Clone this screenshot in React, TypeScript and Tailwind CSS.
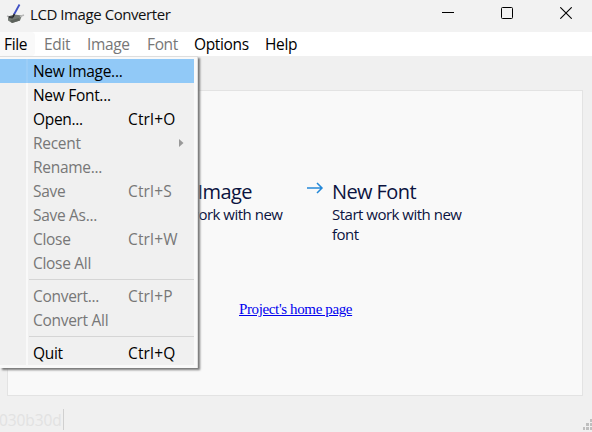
import type { ReactNode } from "react";

type Entry = { label: string; keys?: string; enabled?: boolean; active?: boolean; submenu?: boolean };

const groups: Entry[][] = [
  [
    { label: "New Image...", enabled: true, active: true },
    { label: "New Font...", enabled: true },
    { label: "Open...", keys: "Ctrl+O", enabled: true },
    { label: "Recent", submenu: true },
    { label: "Rename..." },
    { label: "Save", keys: "Ctrl+S" },
    { label: "Save As..." },
    { label: "Close", keys: "Ctrl+W" },
    { label: "Close All" },
  ],
  [{ label: "Convert...", keys: "Ctrl+P" }, { label: "Convert All" }],
  [{ label: "Quit", keys: "Ctrl+Q", enabled: true }],
];

function AppIcon() {
  return (
    <svg className="-mt-[5px]" width="20" height="22" viewBox="0 0 20 22">
      <path d="M2 13.5 L8 11.5 L16 12.5 L14 17.5 L6 20 L2 17.5Z" fill="#747a74" />
      <path d="M4 17.5 L13 15 L14 17.5 L6 20Z" fill="#5d625c" />
      <path d="M1 13 L5 14.5 M14 13.5 L18 12" stroke="#b9b9b9" strokeWidth="1.5" />
      <path d="M2.5 13 L8 13.5 L6.5 15.5 L3 15Z" fill="#353839" />
      <path d="M13.5 1.5 L8 11.5" stroke="#3f50c4" strokeWidth="1.8" />
      <path d="M8.3 11 L7 14" stroke="#24252c" strokeWidth="1.6" />
    </svg>
  );
}

function TitleBar() {
  return (
    <header className="flex h-8 items-center bg-[#f2f2f2] pl-[6px]">
      <AppIcon />
      <span className="ml-[4px] h-[28px] w-[150px] whitespace-nowrap text-[15px] leading-[24px] tracking-[-0.43px] text-[#111]">LCD Image Converter</span>
      <div className="ml-auto flex h-full gap-[47px] pr-[20px] pt-[7px]">
        <svg width="12" height="12" shapeRendering="crispEdges"><path d="M0 5.5H12" stroke="#000" /></svg>
        <svg width="12" height="12"><rect x=".5" y=".5" width="11" height="11" rx="1" fill="none" stroke="#000" /></svg>
        <svg width="12" height="12"><path d="M.3 .3L11.7 11.7M11.7 .3L.3 11.7" stroke="#000" strokeWidth="1.1" /></svg>
      </div>
    </header>
  );
}

function MenuBar() {
  return (
    <nav className="flex h-6 bg-white text-[15.5px] leading-[25px] tracking-[-0.35px] text-[#777]">
      <span className="w-[35px] rounded-r-sm bg-[#f9f9f9] pl-1 text-black">File</span>
      <span className="w-[52px] pl-[9px]">Edit</span>
      <span className="w-[60px]">Image</span>
      <span className="w-[47px]">Font</span>
      <span className="w-[71px] text-black">Options</span>
      <span className="text-black">Help</span>
    </nav>
  );
}

function Row({ label, keys, enabled, active, submenu }: Entry) {
  return (
    <li className={`flex h-6 ${active ? "bg-[#91c9f7]" : ""} ${enabled ? "text-black" : "text-[#777]"}`}>
      <span className={`ml-[26px] w-[2px] ${active ? "bg-[#9bcdf7]" : ""}`} />
      <span className="ml-[5px] w-[95px]">{label}</span>
      <span className="tracking-[0.15px]">{keys}</span>
      {submenu && (
        <svg className="ml-[51px] mt-[8px]" width="5" height="8"><path d="M0 0L4.5 4L0 8Z" fill="#999" /></svg>
      )}
    </li>
  );
}

function FileMenu() {
  return (
    <div className="absolute left-0 top-[56px] h-[312px] w-[198px] border-r border-t border-[#dedede] bg-[#f9f9f9] pt-[2px] shadow-[2px_2px_2px_#777]">
      <div className="flex h-[306px] w-[194px] flex-col bg-[linear-gradient(to_right,#f0f0f0_26px,#f9f9f9_26px,#f9f9f9_28px,#f0f0f0_28px)] text-[15.5px] leading-[25px] tracking-[-0.3px]">
        {groups.map((group, i) => (
          <ul key={i}>
            {i > 0 && <li className="mb-1 ml-[29px] mt-1 h-px bg-[#d5d5d5]" />}
            {group.map((entry) => <Row key={entry.label} {...entry} />)}
          </ul>
        ))}
      </div>
    </div>
  );
}

function Command({ title, children }: { title: string; children: ReactNode }) {
  return (
    <section className="flex w-[166px] text-[#0b1340]">
      <svg className="mt-[2px] shrink-0" width="17" height="12">
        <path d="M0 6H15M10 1L15 6L10 11" fill="none" stroke="#2488d8" strokeWidth="1.5" />
      </svg>
      <div className="ml-[8px] w-[140px]">
        <h2 className="whitespace-nowrap text-[20px] leading-6 tracking-[-0.6px]">{title}</h2>
        <p className="text-[15px] leading-5 tracking-[-0.5px]">{children}</p>
      </div>
    </section>
  );
}

export default function App() {
  return (
    <div className="relative flex h-[432px] w-[592px] flex-col overflow-hidden bg-[#f0f0f0] font-['Open_Sans','Noto_Sans',sans-serif]">
      <TitleBar />
      <MenuBar />
      <main className="ml-[7px] mt-[34px] h-[306px] w-[576px] border border-[#e3e3e3] bg-[#f9f9f9]">
        <div className="flex gap-[13px] pl-[120px] pt-[89px]">
          <Command title="New Image">Start work with new</Command>
          <Command title="New Font">Start work with new<br />font</Command>
        </div>
        <a className="ml-[231px] mt-[55px] block w-[114px] whitespace-nowrap font-['Liberation_Serif',serif] text-[15px] leading-5 tracking-[-0.37px] text-[#0000ee] underline">Project's home page</a>
      </main>
      <footer className="mt-[13px] flex h-[23px] justify-between">
        <span className="-ml-px h-[21px] w-[65px] border-r border-[#d0d0d0] text-[15.5px] leading-[22px] tracking-[-0.1px] text-[#e2e2e2]">030b30d</span>
        <svg className="mt-[10px]" width="9" height="13" fill="#bfbfbf" shapeRendering="crispEdges">
          <path d="M7 0h2v3h-2zM3 4h3v3h-3zM7 4h2v3h-2zM0 8h2v3h-2zM3 8h3v3h-3zM7 8h2v3h-2z" />
        </svg>
      </footer>
      <FileMenu />
    </div>
  );
}
